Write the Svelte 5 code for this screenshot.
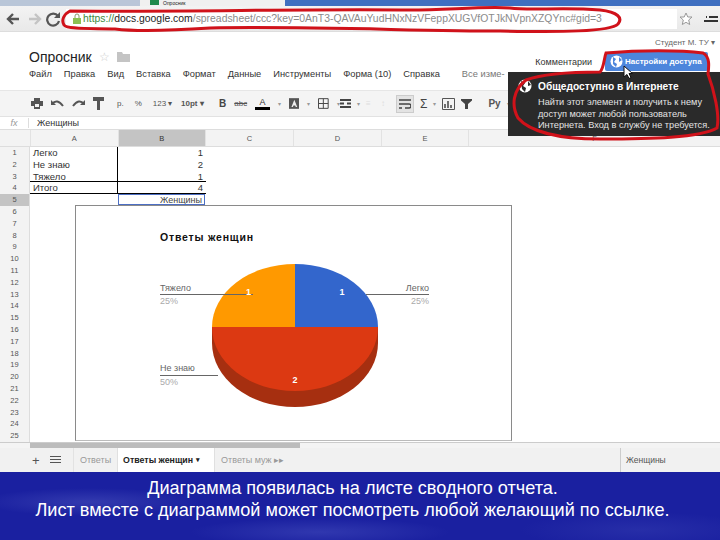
<script>
  const menu = ['Файл','Правка','Вид','Вставка','Формат','Данные','Инструменты','Форма (10)','Справка'];
  const cols = ['A','B','C','D','E','F'];
  const rows = Array.from({ length: 25 }, (_, i) => i + 1);
  const data = { 1: ['Легко', 1], 2: ['Не знаю', 2], 3: ['Тяжело', 1], 4: ['Итого', 4] };
</script>

<div class="page">
  <div class="tabstrip">
    <div class="tab-old"></div>
    <div class="tab-active"><span class="tab-ico"></span><span>Опросник</span></div>
  </div>

  <div class="chrome">
    <svg class="nav" width="56" height="20" viewBox="0 0 56 20">
      <path d="M15 10H5M9 5l-5 5 5 5" fill="none" stroke="#555" stroke-width="2.4"/>
      <path d="M35 10H25M31 5l5 5-5 5" fill="none" stroke="#c4c4c4" stroke-width="2.4"/>
      <path d="M54 7a6 6 0 1 0 1 5" fill="none" stroke="#555" stroke-width="2.2"/>
      <path d="M56 3v6h-6z" fill="#555"/>
    </svg>
    <div class="omnibox">
      <svg width="10" height="12" viewBox="0 0 10 12"><rect x="1" y="5" width="8" height="6" fill="#8cc152"/><path d="M3 5V3a2 2 0 0 1 4 0v2" fill="none" stroke="#8a9a70"/></svg>
      <span class="url"><span class="g">https://</span><span class="k">docs.google.com</span>/spreadsheet/ccc?key=0AnT3-QAVAuYudHNxNzVFeppXUGVfOTJkNVpnXZQYnc#gid=3</span>
    </div>
    <svg class="star" width="14" height="14" viewBox="0 0 14 14"><path d="M7 1l1.8 4H13l-3.3 3 1 4.5L7 10.300l-3.700 2.200 1-4.500L1 5h4.200z" fill="#fff" stroke="#999"/></svg>
    <svg class="wrench" width="16" height="10" viewBox="0 0 16 10"><path d="M1 7h14M6 3h9M3 3h1" stroke="#333" stroke-width="2"/></svg>
  </div>

  <div class="dochead">
    <div class="dh-left">
      <div class="titlerow">
        <span class="title">Опросник</span>
        <span class="tstar">☆</span>
        <svg width="13" height="10" viewBox="0 0 13 10"><path d="M0 0h5l1 2h7v8H0z" fill="#c4c4c4"/></svg>
      </div>
      <div class="menu">
        {#each menu as m}<span>{m}</span>{/each}
        <span class="saved">Все изме-</span>
      </div>
    </div>
    <div class="dh-right">
      <div class="student">Студент М. ТУ ▾</div>
      <div class="btns">
        <span class="comments">Комментарии</span>
        <span class="share">
          <svg width="13" height="13" viewBox="0 0 13 13"><circle cx="6.500" cy="6.500" r="6" fill="#fff"/><path d="M3 2l3 2-2 3 3 2-1 3-3-3zM9 2l3 3-3 2z" fill="#4d86dc"/></svg>
          Настройки доступа
        </span>
      </div>
    </div>
  </div>

  <div class="toolbar">
    <div class="tg g1">
      <svg width="12" height="11" viewBox="0 0 12 11"><path d="M3 0h6v3H3zM0 3h12v5H9v3H3V8H0z" fill="#555"/><rect x="4" y="6" width="4" height="3" fill="#f4f4f4"/></svg>
      <svg width="13" height="9" viewBox="0 0 13 9"><path d="M1 5q5-6 11 2" fill="none" stroke="#555" stroke-width="2"/><path d="M0 1v5h5z" fill="#555"/></svg>
      <svg width="13" height="9" viewBox="0 0 13 9"><path d="M12 5Q7-1 1 7" fill="none" stroke="#555" stroke-width="2"/><path d="M13 1v5H8z" fill="#555"/></svg>
      <svg width="11" height="13" viewBox="0 0 11 13"><path d="M0 0h11v4H0zM4 4h3v9H4z" fill="#555"/></svg>
    </div>
    <div class="tg g2">
      <span class="ti">р.</span><span class="ti">%</span><span class="ti">123 ▾</span>
    </div>
    <div class="tg g3"><span class="ti strong">10pt ▾</span></div>
    <div class="tg g4">
      <span class="ti bold">B</span>
      <span class="ti strike">abc</span>
      <span class="tcolor">A</span>
      <span class="caret">▾</span>
      <svg width="11" height="11" viewBox="0 0 11 11"><rect width="11" height="11" fill="#555"/><path d="M5.500 1.500L2.500 9h1.500l.6-1.500h1.800L7 9h1.500z" fill="#eee"/></svg>
      <span class="caret">▾</span>
      <svg width="11" height="11" viewBox="0 0 11 11"><path d="M.5.500h10v10H.5zM5.500.5v10M.5 5.500h10" fill="none" stroke="#444"/></svg>
      <span class="caret">▾</span>
    </div>
    <div class="tg g5">
      <svg width="11" height="9" viewBox="0 0 11 9"><path d="M0 1h11M0 8h11M0 4.500h4M7 4.500h4" stroke="#444" stroke-width="2"/></svg>
      <span class="caret">▾</span>
      <span class="ti faint">≡</span>
      <span class="ti faint">↕</span>
      <span class="wrap"><svg width="12" height="10" viewBox="0 0 12 10"><path d="M0 1h12M0 5h10a2 2 0 0 1 0 4H6M0 9h3" fill="none" stroke="#444" stroke-width="1.500"/></svg></span>
      <span class="ti sigma">Σ</span>
      <span class="caret">▾</span>
      <svg width="13" height="12" viewBox="0 0 13 12"><path d="M.5.500h12v11H.5z" fill="none" stroke="#555"/><path d="M3 10V6M6 10V3M9 10V7" stroke="#444" stroke-width="1.500"/></svg>
      <svg width="11" height="10" viewBox="0 0 11 10"><path d="M0 0h11v1.500L7 5v5H4V5L0 1.500z" fill="#444"/></svg>
      <span class="ti ru">Ру</span>
      <span class="caret">▾</span>
    </div>
  </div>

  <div class="formula">
    <span class="fx">fx</span>
    <span class="fv">Женщины</span>
  </div>

  <div class="colhead">
    <span class="corner"></span>
    {#each cols as c}<span class="ch" class:sel={c === 'B'}>{c}</span>{/each}
  </div>

  <div class="sheet">
    <div class="rowheads">
      {#each rows as r}<div class="rh" class:sel={r === 5}>{r}</div>{/each}
    </div>
    <div class="cells">
      {#each [1,2,3,4] as r}
        <div class="row" class:sep={r >= 3}>
          <span class="a">{data[r][0]}</span>
          <span class="b">{data[r][1]}</span>
        </div>
      {/each}
      <div class="row last">
        <span class="a none"></span>
        <span class="b selcell">Женщины</span>
      </div>
    </div>

    <div class="chart">
      <svg width="437" height="235" viewBox="75 206 437 235">
        <text x="160" y="241" class="ct">Ответы женщин</text>
        <path d="M212 327v16a83 64 0 0 0 166 0v-16z" fill="#a62f10"/>
        <path d="M295 327V264a83 63 0 0 1 83 63z" fill="#3366cc"/>
        <path d="M295 327V264a83 63 0 0 0-83 63z" fill="#ff9900"/>
        <path d="M212 327a83 64 0 0 0 166 0z" fill="#dc3912"/>
        <path d="M160 294.500h93M366 294.500h63M160 375.500h58" stroke="#666" stroke-width="1" fill="none"/>
        <text x="160" y="291" class="lb">Тяжело</text>
        <text x="160" y="304" class="lp">25%</text>
        <text x="429" y="291" class="lb" text-anchor="end">Легко</text>
        <text x="429" y="304" class="lp" text-anchor="end">25%</text>
        <text x="160" y="371" class="lb">Не знаю</text>
        <text x="160" y="385" class="lp">50%</text>
        <text x="246" y="295" class="pv">1</text>
        <text x="342" y="295" class="pv" text-anchor="middle">1</text>
        <text x="295" y="383" class="pv" text-anchor="middle">2</text>
      </svg>
    </div>
  </div>

  <div class="scroll"><span class="thumb"></span></div>

  <div class="tabs">
    <div class="tleft">
      <span class="plus">+</span>
      <svg width="11" height="8" viewBox="0 0 11 8"><path d="M0 .5h11M0 3.500h11M0 6.500h11" stroke="#555"/></svg>
    </div>
    <span class="sh gray">Ответы</span>
    <span class="sh on">Ответы женщин <i>▾</i></span>
    <span class="sh gray">Ответы муж ▸▸</span>
    <span class="summary">Женщины</span>
  </div>

  <div class="caption">
    <p>Диаграмма появилась на листе сводного отчета.</p>
    <p>Лист вместе с диаграммой может посмотреть любой желающий по ссылке.</p>
  </div>

  <div class="tooltip">
    <div class="tt-head">
      <svg width="14" height="14" viewBox="0 0 14 14"><circle cx="7" cy="7" r="6.500" fill="#fff"/><path d="M3 2l4 2-2 3 3 2-1 4-3-3zM10 2l3 4-3 1z" fill="#2a2a2a"/></svg>
      <b>Общедоступно в Интернете</b>
    </div>
    <div class="tt-body">Найти этот элемент и получить к нему доступ может любой пользователь Интернета. Вход в службу не требуется.</div>
  </div>

  <svg class="cursor" width="10" height="14" viewBox="0 0 10 14"><path d="M1 1v11l3-2.500 2 4 2-1-2-4h3.500z" fill="#fff" stroke="#111"/></svg>

  <svg class="ink" width="720" height="540" viewBox="0 0 720 540">
    <path d="M70 11 C64 14 61 20 64 25 C67 30 100 28 115 29 C140 32 180 30 210 28 C300 26 420 31 500 31 C560 32 610 32 618 24 C623 18 618 12 600 10 C560 7 530 11 510 8 C480 6 440 11 400 10 C300 9 180 12 70 11 Z" fill="none" stroke="#d0121a" stroke-width="3"/>
    <path d="M606 53 C640 50 680 50 703 53 C710 57 709 66 708 74 C714 90 720 115 717 128 C700 138 650 139 600 139 C560 139 530 132 518 118 C511 105 513 90 526 80 C545 73 580 72 600 72 C604 68 604 58 606 53 Z" fill="none" stroke="#d0121a" stroke-width="3"/>
  </svg>
</div>

<style>
  :global(body) { margin: 0; background: #fff; }
  .page {
    position: relative;
    width: 720px;
    height: 540px;
    overflow: hidden;
    display: flex;
    flex-direction: column;
    font-family: "Liberation Sans", Arial, sans-serif;
    background: #fff;
    color: #222;
  }
  .tabstrip {
    height: 6px;
    flex: none;
    display: flex;
    background: #3f6fc0;
    overflow: hidden;
  }
  .tab-old { width: 140px; background: #b9c6d8; }
  .tab-active {
    width: 145px;
    background: #f0f0f0;
    display: flex;
    gap: 4px;
    padding-left: 10px;
    box-sizing: border-box;
    font-size: 5px;
    line-height: 6px;
  }
  .tab-ico { width: 9px; height: 5px; background: #1f8a4c; }
  .chrome {
    height: 26px;
    flex: none;
    display: flex;
    align-items: center;
    background: linear-gradient(#f3f3f3, #e9e9e9);
    box-sizing: border-box;
    padding-left: 4px;
    border-bottom: 1px solid #ddd;
  }
  .nav { flex: none; }
  .omnibox {
    flex: none;
    width: 611px;
    margin-left: 6px;
    height: 20px;
    background: #fff;
    display: flex;
    align-items: center;
    gap: 1px;
    padding-left: 6px;
    box-sizing: border-box;
  }
  .url { font-size: 10.400px; color: #8b8b8b; white-space: nowrap; }
  .url .g { color: #3d8a3d; }
  .url .k { color: #222; }
  .star { margin-left: 2px; flex: none; }
  .wrench { margin-left: 10px; flex: none; }

  .dochead {
    height: 58px;
    flex: none;
    display: flex;
    justify-content: space-between;
  }
  .dh-left { padding-left: 29px; padding-top: 16px; }
  .titlerow { display: flex; align-items: center; gap: 7px; height: 18px; }
  .title { font-size: 14px; color: #222; }
  .tstar { color: #ccc; font-size: 12px; }
  .menu {
    margin-top: 3px;
    display: flex;
    gap: 12px;
    font-size: 9.300px;
    color: #333;
    white-space: nowrap;
  }
  .saved { color: #777; margin-left: 10px; }
  .dh-right { display: flex; flex-direction: column; align-items: flex-end; padding-right: 12px; padding-top: 6px; }
  .student { font-size: 8px; color: #666; height: 14px; margin-right: -7px; }
  .btns { display: flex; align-items: center; gap: 13px; }
  .comments { font-size: 9px; color: #333; }
  .share {
    width: 103px;
    height: 19px;
    background: #4d86dc;
    color: #fff;
    font-size: 8px;
    font-weight: bold;
    border-radius: 2px;
    display: flex;
    align-items: center;
    gap: 2px;
    padding-left: 5px;
    box-sizing: border-box;
    white-space: nowrap;
  }

  .toolbar {
    height: 27px;
    flex: none;
    display: flex;
    align-items: center;
    background: #f4f4f4;
    border-top: 1px solid #e6e6e6;
    border-bottom: 1px solid #e2e2e2;
    box-sizing: border-box;
    padding-left: 31px;
    font-size: 8px;
    color: #555;
  }
  .tg { display: flex; align-items: center; flex: none; }
  .g1 { gap: 8px; width: 84px; }
  .g2 { gap: 11px; width: 66px; padding-left: 2px; box-sizing: border-box; }
  .g3 { width: 38px; }
  .g4 { gap: 8px; width: 121px; }
  .g5 { gap: 6px; }
  .ti { white-space: nowrap; }
  .strong { font-weight: bold; color: #555; }
  .bold { font-weight: bold; font-size: 10px; color: #444; }
  .strike { text-decoration: line-through; color: #555; }
  .tcolor { font-size: 9px; color: #333; border-bottom: 3px solid #000; width: 15px; text-align: center; line-height: 10px; }
  .caret { font-size: 6px; color: #999; }
  .faint { color: #ddd; width: 9px; }
  .wrap { width: 18px; height: 18px; background: #e3e3e3; border: 1px solid #ccc; box-sizing: border-box; display: flex; align-items: center; justify-content: center; }
  .sigma { font-size: 12px; color: #444; }
  .ru { font-weight: bold; font-size: 10px; color: #555; margin-left: 10px; }

  .formula {
    height: 13px;
    flex: none;
    display: flex;
    align-items: center;
    font-size: 9px;
    border-bottom: 1px solid #ddd;
    box-sizing: border-box;
  }
  .fx { width: 29px; text-align: center; color: #999; font-style: italic; border-right: 1px solid #ddd; box-sizing: border-box; }
  .fv { padding-left: 8px; color: #333; }

  .colhead {
    height: 17px;
    flex: none;
    display: grid;
    grid-template-columns: 30px 87.500px 87.500px 88px 88px 87px 1fr;
    background: #f3f3f3;
    font-size: 7.500px;
    color: #555;
    border-bottom: 1px solid #ddd;
    box-sizing: border-box;
  }
  .ch { display: flex; align-items: center; justify-content: center; border-left: 1px solid #e2e2e2; }
  .ch.sel { background: #c4c4c4; color: #333; }

  .sheet {
    position: relative;
    height: 296px;
    flex: none;
    display: flex;
    border-bottom: 1px solid #ccc;
    box-sizing: border-box;
  }
  .rowheads { width: 30px; flex: none; background: #f3f3f3; border-right: 1px solid #ddd; box-sizing: border-box; }
  .rh { height: 11.800px; line-height: 11.800px; font-size: 7.500px; color: #555; text-align: center; }
  .rh.sel { background: #c4c4c4; }
  .cells { flex: none; width: 176px; }
  .row { display: flex; height: 11.800px; font-size: 9.500px; line-height: 11.800px; color: #333; box-sizing: border-box; }
  .a { width: 88px; padding-left: 3px; box-sizing: border-box; border-right: 1px solid #000; }
  .a.none { border-right: 0; }
  .b { width: 87px; text-align: right; padding-right: 2px; box-sizing: border-box; }
  .row.sep { border-bottom: 1px solid #000; }
  .selcell { border: 1px solid #4d6fc4; border-width: 1px 1px 2px; font-size: 9px; line-height: 11px; color: #444; overflow: hidden; }

  .chart {
    position: absolute;
    left: 75px;
    top: 58px;
    width: 437px;
    height: 236px;
    background: #fff;
    border: 1px solid #8a8a8a;
    border-bottom-color: #bbb;
    box-sizing: border-box;
    overflow: hidden;
  }
  .chart svg { display: block; margin: 0 0 0 -1px; }
  .ct { font: bold 10.500px "Liberation Sans", Arial, sans-serif; fill: #111; letter-spacing: .8px; }
  .lb { font: 9px "Liberation Sans", Arial, sans-serif; fill: #666; }
  .lp { font: 9px "Liberation Sans", Arial, sans-serif; fill: #aaa; }
  .pv { font: bold 9px "Liberation Sans", Arial, sans-serif; fill: #fff; }

  .scroll { height: 5px; flex: none; background: #f4f4f4; padding-left: 30px; }
  .thumb { display: block; width: 270px; height: 5px; background: #bcbcbc; }

  .tabs {
    height: 24px;
    flex: none;
    display: flex;
    align-items: stretch;
    background: #f1f1f1;
    font-size: 9px;
    color: #333;
    white-space: nowrap;
  }
  .tleft { width: 74px; box-sizing: border-box; padding-left: 32px; display: flex; align-items: center; gap: 10px; border-right: 1px solid #e2e2e2; }
  .plus { font-size: 13px; color: #555; }
  .sh { display: flex; align-items: center; }
  .gray { color: #999; padding: 0 6px; }
  .on { width: 98px; background: #fff; font-weight: bold; color: #222; padding-left: 5px; box-sizing: border-box; gap: 3px; border: solid #e0e0e0; border-width: 0 1px; white-space: nowrap; overflow: hidden; font-size: 8.800px; }
  .on i { font-style: normal; font-size: 7px; }
  .summary { margin-left: auto; width: 100px; border-left: 1px solid #ccc; box-sizing: border-box; padding-left: 5px; display: flex; align-items: center; color: #555; font-size: 8.500px; }

  .caption {
    height: 68px;
    flex: none;
    box-sizing: border-box;
    padding: 5px 15px 0 0;
    color: #fff;
    text-align: center;
    font-size: 18.100px;
    line-height: 22px;
    background:
      radial-gradient(ellipse 110px 14px at 90px 30px, rgba(110,120,210,.3), transparent),
      radial-gradient(ellipse 130px 14px at 320px 60px, rgba(100,110,210,.3), transparent),
      radial-gradient(ellipse 120px 18px at 640px 58px, rgba(90,100,200,.2), transparent),
      #1a20a0;
  }
  .caption p { margin: 0; }

  .tooltip {
    position: absolute;
    left: 508px;
    top: 72px;
    width: 212px;
    height: 64px;
    background: #2a2a2a;
    color: #fff;
    box-sizing: border-box;
    padding: 7px 6px 0 10px;
  }
  .tt-head { display: flex; align-items: center; gap: 6px; font-size: 10.200px; white-space: nowrap; }
  .tt-body { font-size: 9.200px; line-height: 11.500px; margin-top: 4px; margin-left: 20px; width: 178px; color: #e4e4e4; }

  .cursor { position: absolute; left: 623px; top: 65px; }
  .ink { position: absolute; left: 0; top: 0; pointer-events: none; }
</style>
